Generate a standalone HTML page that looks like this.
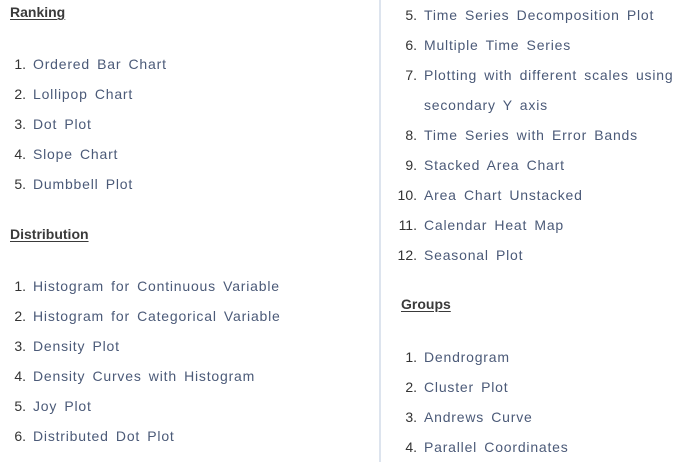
<!DOCTYPE html>
<html><head><meta charset="utf-8"><style>
body{margin:0;width:683px;height:467px;background:#fff;font-family:"Liberation Sans",sans-serif;position:relative;overflow:hidden}
.h{position:absolute;font-size:14px;font-weight:bold;color:#3a3a3a;text-decoration:underline;text-underline-offset:2px;letter-spacing:0px}
.i{position:absolute;font-size:14px;color:#4b5a78;letter-spacing:0.8px;word-spacing:2.5px;line-height:18px;white-space:nowrap}
.n{position:absolute;color:#333;text-align:right;width:20px;letter-spacing:0}
.t{position:absolute}
.d{position:absolute;left:379px;top:0;width:2px;height:462px;background:#dde4ee}
</style></head><body>
<div class="d"></div>
<div class="h" style="left:10px;top:4px">Ranking</div>
<div class="h" style="left:10px;top:226px">Distribution</div>
<div class="h" style="left:401px;top:296px">Groups</div>
<script>
function add(xt,y,n,t){var d=document.createElement('div');d.className='i';d.style.top=(y-9)+'px';d.style.left='0px';
d.innerHTML='<span class="n" style="left:'+(xt-27)+'px">'+n+'.</span><span class="t" style="left:'+xt+'px">'+t+'</span>';document.body.appendChild(d);}
var L=[[64,1,'Ordered Bar Chart'],[94,2,'Lollipop Chart'],[124,3,'Dot Plot'],[154,4,'Slope Chart'],[184,5,'Dumbbell Plot'],
[286,1,'Histogram for Continuous Variable'],[316,2,'Histogram for Categorical Variable'],[346,3,'Density Plot'],[376,4,'Density Curves with Histogram'],[406,5,'Joy Plot'],[436,6,'Distributed Dot Plot']];
L.forEach(function(a){add(33,a[0],a[1],a[2]);});
var R=[[15,5,'Time Series Decomposition Plot'],[45,6,'Multiple Time Series'],[75,7,'Plotting with different scales using'],[135,8,'Time Series with Error Bands'],[165,9,'Stacked Area Chart'],[195,10,'Area Chart Unstacked'],[225,11,'Calendar Heat Map'],[255,12,'Seasonal Plot'],
[357,1,'Dendrogram'],[387,2,'Cluster Plot'],[417,3,'Andrews Curve'],[447,4,'Parallel Coordinates']];
R.forEach(function(a){add(424,a[0],a[1],a[2]);});
var d=document.createElement('div');d.className='i';d.style.top='96px';d.style.left='424px';d.textContent='secondary Y axis';document.body.appendChild(d);
</script>
</body></html>
